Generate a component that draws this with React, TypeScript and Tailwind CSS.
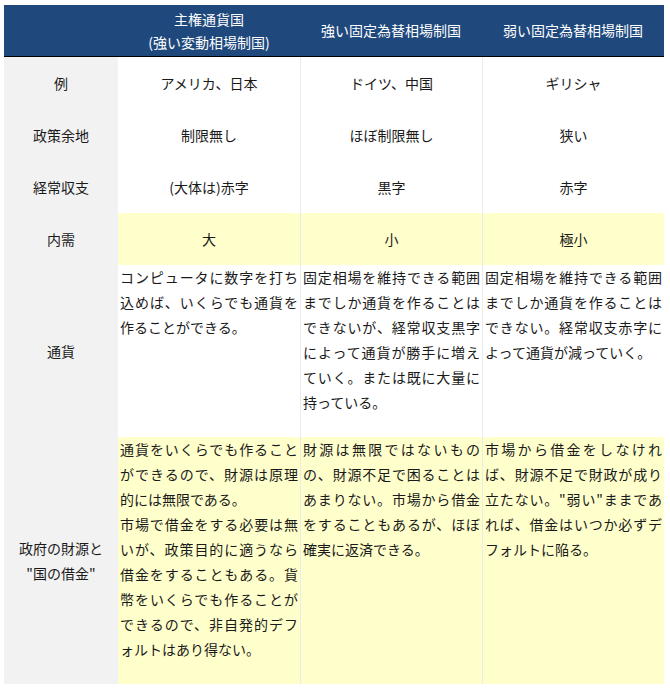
import React from 'react';

const font = { fontFamily: '"Noto Sans CJK JP", "Noto Sans", sans-serif' };

type Row = {
  label: React.ReactNode;
  cells: React.ReactNode[];
  long?: boolean;
  yellow?: boolean;
};

const rows: Row[] = [
  { label: '例', cells: ['アメリカ、日本', 'ドイツ、中国', 'ギリシャ'] },
  { label: '政策余地', cells: ['制限無し', 'ほぼ制限無し', '狭い'] },
  { label: '経常収支', cells: ['(大体は)赤字', '黒字', '赤字'] },
  { label: '内需', cells: ['大', '小', '極小'], yellow: true },
  {
    label: '通貨',
    long: true,
    cells: [
      'コンピュータに数字を打ち込めば、いくらでも通貨を作ることができる。',
      '固定相場を維持できる範囲までしか通貨を作ることはできないが、経常収支黒字によって通貨が勝手に増えていく。または既に大量に持っている。',
      '固定相場を維持できる範囲までしか通貨を作ることはできない。経常収支赤字によって通貨が減っていく。',
    ],
  },
  {
    label: (
      <>
        政府の財源と
        <br />
        "国の借金"
      </>
    ),
    long: true,
    yellow: true,
    cells: [
      <>
        通貨をいくらでも作ることができるので、財源は原理的には無限である。
        <br />
        市場で借金をする必要は無いが、政策目的に適うなら借金をすることもある。貨幣をいくらでも作ることができるので、非自発的デフォルトはあり得ない。
      </>,
      '財源は無限ではないものの、財源不足で困ることはあまりない。市場から借金をすることもあるが、ほぼ確実に返済できる。',
      '市場から借金をしなければ、財源不足で財政が成り立たない。"弱い"ままであれば、借金はいつか必ずデフォルトに陥る。',
    ],
  },
];

const headers: React.ReactNode[] = [
  <>
    主権通貨国
    <br />
    (強い変動相場制国)
  </>,
  '強い固定為替相場制国',
  '弱い固定為替相場制国',
];

export default function App() {
  return (
    <div className="bg-white min-h-screen pt-[5px] pl-1 text-[14px] text-[#1a1a1a]" style={font}>
      <div className="grid w-[660px] grid-cols-[114px_182px_182px_182px]">
        {/* header */}
        <div className="h-[52px] bg-[#1f497d] border-b border-black" />
        {headers.map((h, i) => (
          <div
            key={i}
            className="h-[52px] bg-[#1f497d] border-b border-black flex items-center justify-center text-center text-white leading-[23px]"
          >
            <div>{h}</div>
          </div>
        ))}

        {rows.map((r, ri) => (
          <React.Fragment key={ri}>
            <div
              className={`bg-[#f2f2f2] flex items-center justify-center text-center leading-[25px] ${
                r.long ? '' : 'h-[52px]'
              }`}
            >
              <div>{r.label}</div>
            </div>
            {r.cells.map((c, ci) => (
              <div
                key={ci}
                className={`${r.yellow ? 'bg-[#ffffcc]' : 'bg-white'} ${
                  ci > 0 ? 'border-l border-[#ebebeb]' : ''
                } ${
                  r.long
                    ? 'px-[2px] pb-[22px] leading-[25px] text-justify'
                    : 'h-[52px] flex items-center justify-center text-center'
                }`}
              >
                {c}
              </div>
            ))}
          </React.Fragment>
        ))}
      </div>
    </div>
  );
}
